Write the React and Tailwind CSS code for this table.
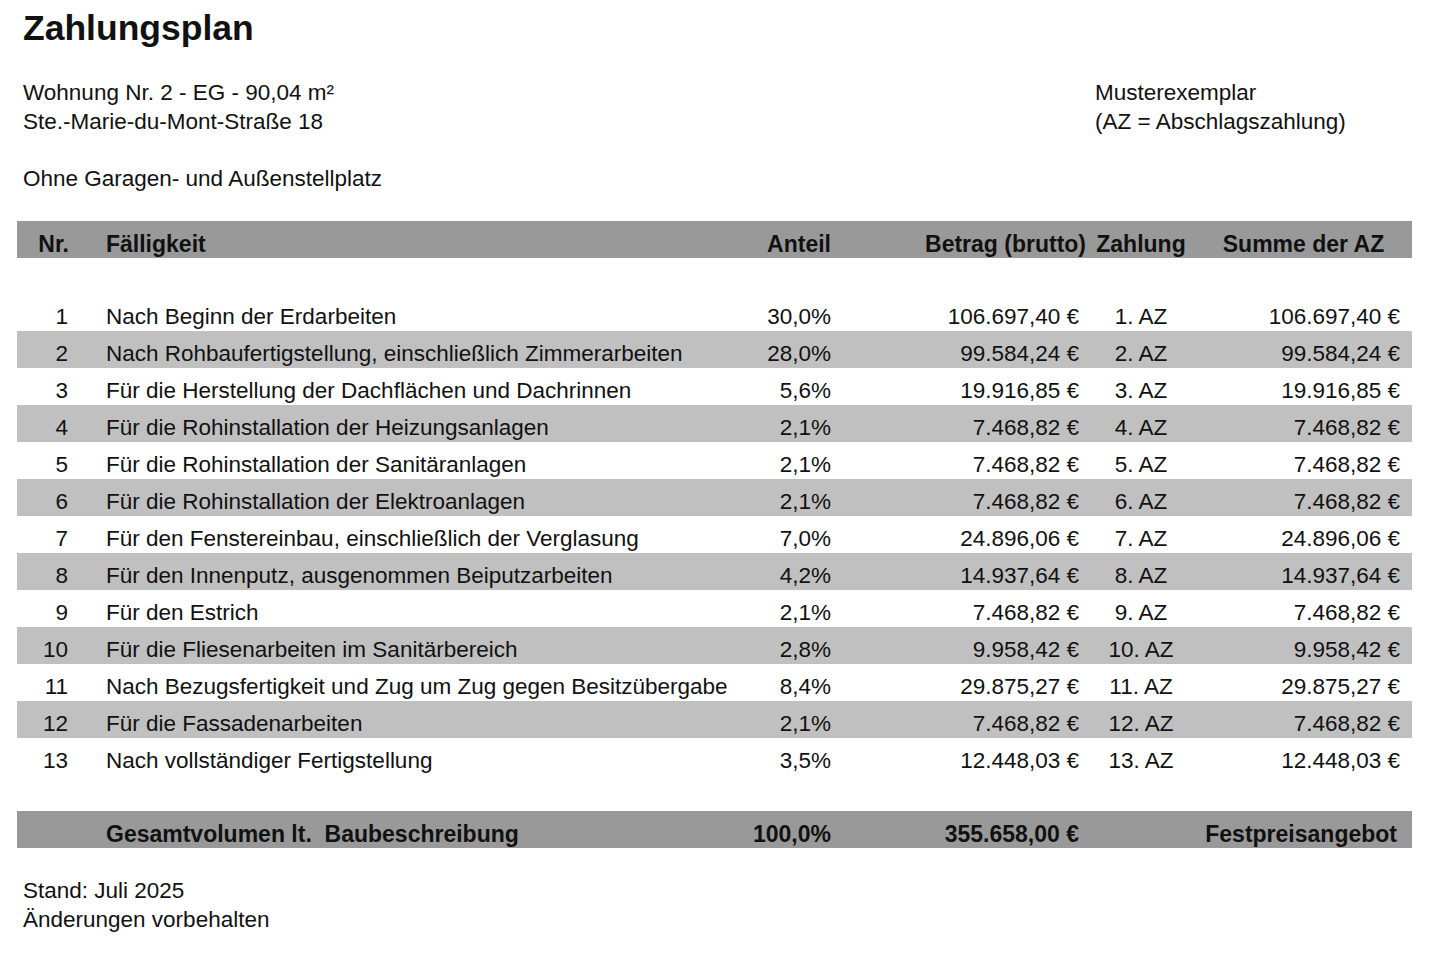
import React from "react";

const rows = [
  ["1", "Nach Beginn der Erdarbeiten", "30,0%", "106.697,40 €", "1. AZ", "106.697,40 €"],
  ["2", "Nach Rohbaufertigstellung, einschließlich Zimmerarbeiten", "28,0%", "99.584,24 €", "2. AZ", "99.584,24 €"],
  ["3", "Für die Herstellung der Dachflächen und Dachrinnen", "5,6%", "19.916,85 €", "3. AZ", "19.916,85 €"],
  ["4", "Für die Rohinstallation der Heizungsanlagen", "2,1%", "7.468,82 €", "4. AZ", "7.468,82 €"],
  ["5", "Für die Rohinstallation der Sanitäranlagen", "2,1%", "7.468,82 €", "5. AZ", "7.468,82 €"],
  ["6", "Für die Rohinstallation der Elektroanlagen", "2,1%", "7.468,82 €", "6. AZ", "7.468,82 €"],
  ["7", "Für den Fenstereinbau, einschließlich der Verglasung", "7,0%", "24.896,06 €", "7. AZ", "24.896,06 €"],
  ["8", "Für den Innenputz, ausgenommen Beiputzarbeiten", "4,2%", "14.937,64 €", "8. AZ", "14.937,64 €"],
  ["9", "Für den Estrich", "2,1%", "7.468,82 €", "9. AZ", "7.468,82 €"],
  ["10", "Für die Fliesenarbeiten im Sanitärbereich", "2,8%", "9.958,42 €", "10. AZ", "9.958,42 €"],
  ["11", "Nach Bezugsfertigkeit und Zug um Zug gegen Besitzübergabe", "8,4%", "29.875,27 €", "11. AZ", "29.875,27 €"],
  ["12", "Für die Fassadenarbeiten", "2,1%", "7.468,82 €", "12. AZ", "7.468,82 €"],
  ["13", "Nach vollständiger Fertigstellung", "3,5%", "12.448,03 €", "13. AZ", "12.448,03 €"],
];

const grid = "grid grid-cols-[55px_668px_95px_252px_108px_217px] items-end h-[37px] pb-[2px] leading-[24px]";

export default function App() {
  return (
    <div
      className="w-[1440px] h-[955px] bg-white text-[#111] text-[22.5px] overflow-hidden"
      style={{ fontFamily: '"Liberation Sans", Arial, sans-serif' }}
    >
      <div className="pl-[23px] pt-[8px]">
        <h1 className="text-[35.5px] font-bold leading-[40px]">Zahlungsplan</h1>
        <div className="flex mt-[30px] leading-[29px]">
          <div className="w-[1072px]">
            <div>Wohnung Nr. 2 - EG - 90,04 m²</div>
            <div>Ste.-Marie-du-Mont-Straße 18</div>
            <div className="h-[28px]"></div>
            <div>Ohne Garagen- und Außenstellplatz</div>
          </div>
          <div>
            <div>Musterexemplar</div>
            <div>(AZ = Abschlagszahlung)</div>
          </div>
        </div>
      </div>

      <div className="ml-[17px] w-[1395px] mt-[28px]">
        <div className={grid + " bg-[#999999] font-bold text-[23px]"}>
          <div className="text-right pr-[3px]">Nr.</div>
          <div className="pl-[34px]">Fälligkeit</div>
          <div className="text-right pr-[4px]">Anteil</div>
          <div className="text-right pr-[1px] whitespace-nowrap">Betrag (brutto)</div>
          <div className="text-center">Zahlung</div>
          <div className="text-center">Summe der AZ</div>
        </div>
        <div className="h-[36px]"></div>
        {rows.map((r, i) => (
          <div key={r[0]} className={grid + (i % 2 === 1 ? " bg-[#c0c0c0]" : "")}>
            <div className="text-right pr-[4px]">{r[0]}</div>
            <div className="pl-[34px] whitespace-nowrap">{r[1]}</div>
            <div className="text-right pr-[4px]">{r[2]}</div>
            <div className="text-right pr-[8px]">{r[3]}</div>
            <div className="text-center">{r[4]}</div>
            <div className="text-right pr-[12px]">{r[5]}</div>
          </div>
        ))}
        <div className="h-[36px]"></div>
        <div className={grid + " bg-[#999999] font-bold text-[23px]"}>
          <div></div>
          <div className="pl-[34px] whitespace-pre">Gesamtvolumen lt.  Baubeschreibung</div>
          <div className="text-right pr-[4px]">100,0%</div>
          <div className="text-right pr-[8px]">355.658,00 €</div>
          <div className="col-span-2 text-right pr-[15px]">Festpreisangebot</div>
        </div>
      </div>

      <div className="pl-[23px] mt-[28px] leading-[29px]">
        <div>Stand: Juli 2025</div>
        <div>Änderungen vorbehalten</div>
      </div>
    </div>
  );
}
